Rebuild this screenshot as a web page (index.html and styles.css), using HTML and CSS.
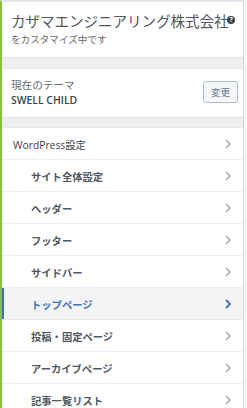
FILE: index.html
```html
<!DOCTYPE html>
<html lang="ja">

<head>
    <meta charset="UTF-8">
    <meta name="viewport" content="width=device-width, initial-scale=1.0">
    <title>カスタマイズ</title>

    <link rel="stylesheet" href="styles.css">
</head>

<body>

    <div class="panel">
        <div class="head">
            <div class="title">
                カザマエンジニアリング株式会社
                <span class="help">?</span>
            </div>
            <div class="sub">をカスタマイズ中です</div>
        </div>

        <div class="gap"></div>

        <div class="theme">
            <div class="theme-info">
                <div class="theme-label">現在のテーマ</div>
                <div class="theme-name">SWELL CHILD</div>
            </div>
            <button class="change">変更</button>
        </div>

        <div class="gap small"></div>

        <ul class="menu">
            <li class="item top">WordPress設定<svg class="chev" viewBox="0 0 6 10"><polyline points="1,1 5,5 1,9" /></svg></li>
            <li class="item">サイト全体設定<svg class="chev" viewBox="0 0 6 10"><polyline points="1,1 5,5 1,9" /></svg></li>
            <li class="item">ヘッダー<svg class="chev" viewBox="0 0 6 10"><polyline points="1,1 5,5 1,9" /></svg></li>
            <li class="item">フッター<svg class="chev" viewBox="0 0 6 10"><polyline points="1,1 5,5 1,9" /></svg></li>
            <li class="item">サイドバー<svg class="chev" viewBox="0 0 6 10"><polyline points="1,1 5,5 1,9" /></svg></li>
            <li class="item active">トップページ<svg class="chev" viewBox="0 0 6 10"><polyline points="1,1 5,5 1,9" /></svg></li>
            <li class="item">投稿・固定ページ<svg class="chev" viewBox="0 0 6 10"><polyline points="1,1 5,5 1,9" /></svg></li>
            <li class="item">アーカイブページ<svg class="chev" viewBox="0 0 6 10"><polyline points="1,1 5,5 1,9" /></svg></li>
            <li class="item">記事一覧リスト<svg class="chev" viewBox="0 0 6 10"><polyline points="1,1 5,5 1,9" /></svg></li>
        </ul>
    </div>

</body>

</html>
```

FILE: styles.css
```css
html,
body {
    margin: 0;
    background: #f7f7f7;
    font-family: "Open Sans", "Noto Sans CJK JP", sans-serif;
    overflow: hidden;
}

.panel {
    width: 244px;
    box-sizing: border-box;
    height: 408px;
    background: #fff;
    border-left: 2px solid #82c341;
    border-right: 1px solid #d6d6d6;
    border-top: 2px solid #e4e4e4;
}

.head {
    height: 55px;
    padding: 9px 0 0 9px;
    box-sizing: border-box;

    .title {
        position: relative;
        font-size: 14.6px;
        line-height: 20px;
        color: #50575e;
        white-space: nowrap;
        letter-spacing: -0.1px;
    }

    .help {
        position: absolute;
        left: 216px;
        top: 5px;
        width: 8px;
        height: 8px;
        border-radius: 50%;
        background: #3c434a;
        color: #fff;
        font-size: 7px;
        font-weight: 700;
        line-height: 8px;
        text-align: center;
    }

    .sub {
        margin-top: 2px;
        font-size: 9.6px;
        line-height: 14px;
        color: #646970;
    }
}

.gap {
    height: 12px;
    background: #efefef;
    border-top: 1px solid #e2e2e2;
    border-bottom: 1px solid #e8e8e8;
    box-sizing: border-box;
}

.gap.small {
    height: 11px;
}

.theme {
    height: 48px;
    display: flex;
    align-items: center;
    justify-content: space-between;
    padding: 0 5px 0 9px;

    .theme-label {
        font-size: 10.6px;
        line-height: 15px;
        color: #646970;
    }

    .theme-name {
        font-size: 10.4px;
        line-height: 15px;
        font-weight: 600;
        color: #3c434a;
    }

    .change {
        width: 35px;
        height: 22px;
        margin-top: -2px;
        padding: 0;
        border: 1px solid #a9bcd4;
        border-radius: 3px;
        background: #f6f7f7;
        color: #5f7891;
        font-family: "Noto Sans CJK JP", sans-serif;
        font-size: 9.5px;
    }
}

.menu {
    list-style: none;
    margin: 0;
    padding: 0;

    .item {
        height: 32px;
        box-sizing: border-box;
        display: flex;
        align-items: center;
        justify-content: space-between;
        padding: 1px 12px 0 29px;
        border-bottom: 1px solid #efefef;
        font-size: 10.3px;
        font-weight: 700;
        color: #50575e;
        white-space: nowrap;
    }

    .item.top {
        padding-left: 11px;
        font-weight: 400;
        color: #3c434a;
    }

    .item.active {
        background: #f3f4f5;
        color: #3d72b3;
        box-shadow: inset 2px 0 0 #3d6fb0;
        border-bottom-color: #e8e8e8;
    }

    .chev {
        width: 6px;
        height: 10px;
        fill: none;
        stroke: #a7aaad;
        stroke-width: 1.5;
    }

    .active .chev {
        stroke: #3d72b3;
        stroke-width: 1.8;
    }
}
```
